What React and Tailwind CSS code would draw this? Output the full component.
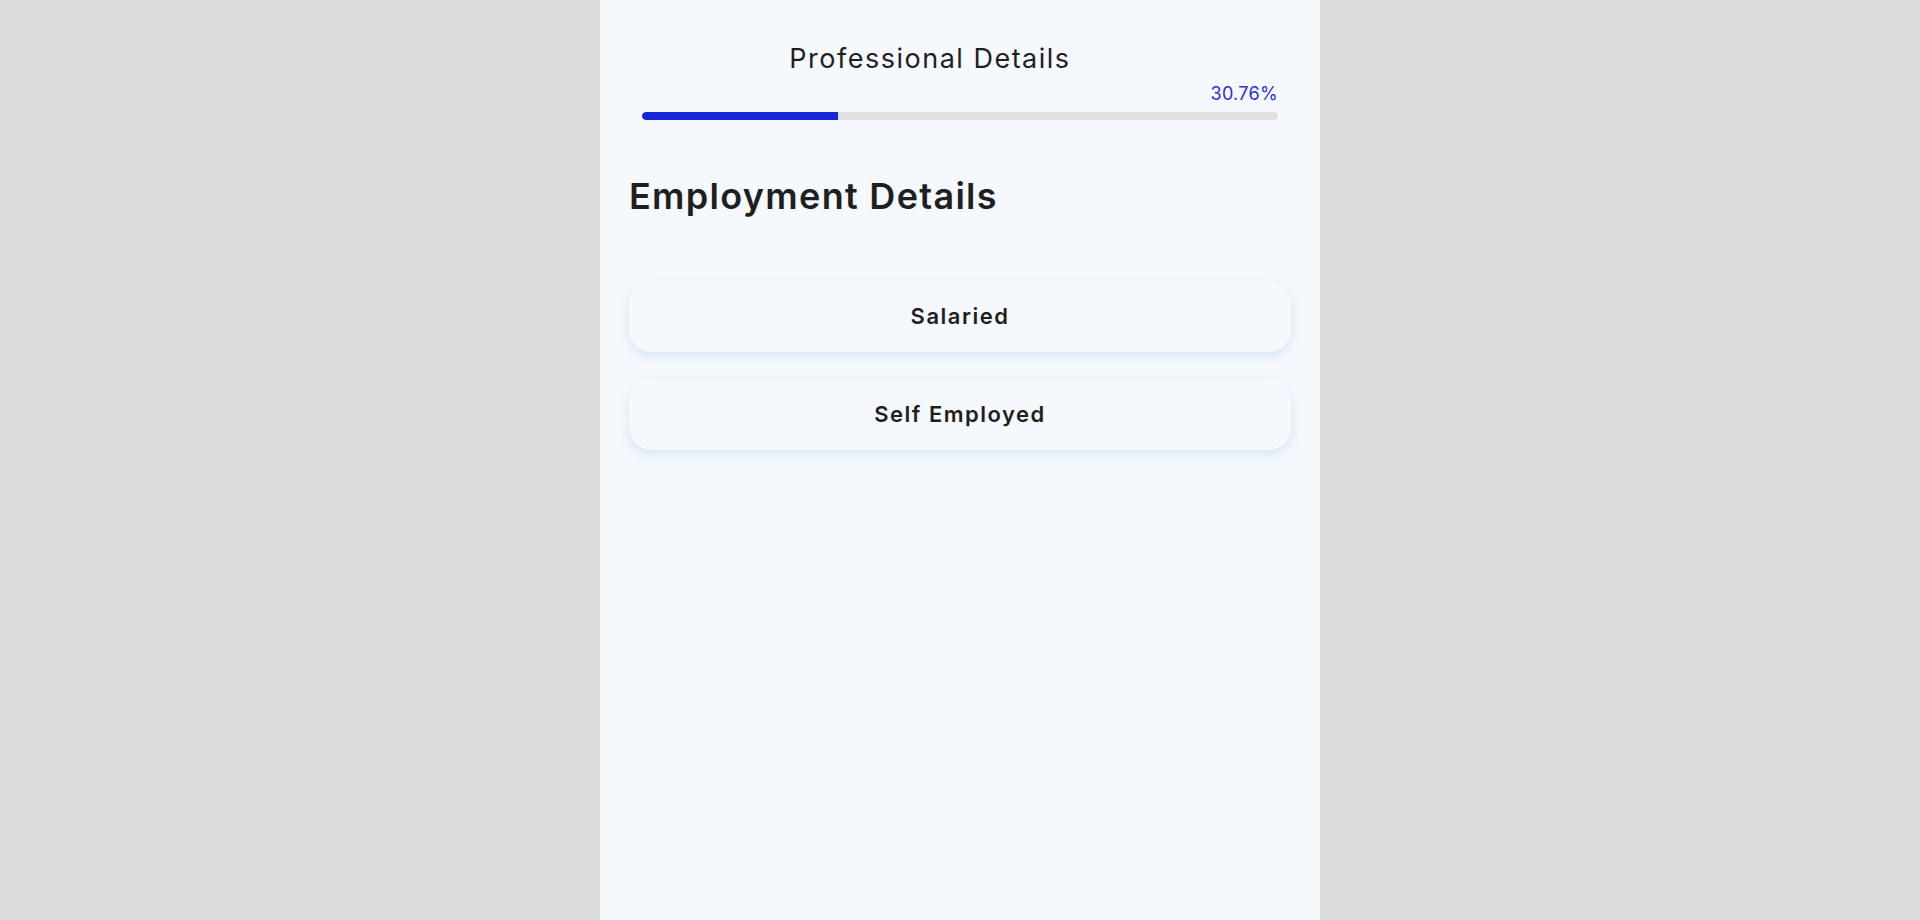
import React from "react";

const options = ["Salaried", "Self Employed"];

const App = () => {
  const progress = 30.76;

  return (
    <div className="min-h-screen w-full bg-[#dcdcdc] flex justify-center" style={{ fontFamily: "Inter, 'Noto Sans', sans-serif" }}>
      <div className="w-[720px] min-h-screen bg-[#f5f9fe]">
        {/* header + progress */}
        <div className="px-[42px] pt-[39px]">
          <h1 className="text-center pr-[60px] text-[27px] leading-[40px] text-[#1f1f1f] tracking-[1.5px]">
            Professional Details
          </h1>
          <div className="flex justify-end mt-[3px]">
            <span className="text-[18px] leading-[24px] text-[#2b2fd8] tracking-[0.3px]">{progress}%</span>
          </div>
          <div className="mt-[6px] h-[8px] w-full rounded-full bg-[#e1e1e1] overflow-hidden">
            <div className="h-full bg-[#1627d8] rounded-l-full" style={{ width: `${progress}%` }} />
          </div>
        </div>

        {/* content */}
        <div className="px-[29px]">
          <h2 className="mt-[50px] text-[36px] leading-[52px] font-semibold text-[#1f1f1f] tracking-[1.3px]">
            Employment Details
          </h2>
          <div className="mt-[59px] flex flex-col gap-[27px]">
            {options.map((o) => (
              <button
                key={o}
                className="h-[71px] w-full rounded-[22px] bg-[#f5f9fe] shadow-[0_4px_12px_rgba(120,150,190,0.22)] text-[22px] font-semibold text-[#1f1f1f] tracking-[1.5px]"
              >
                {o}
              </button>
            ))}
          </div>
        </div>
      </div>
    </div>
  );
};

export default App;
